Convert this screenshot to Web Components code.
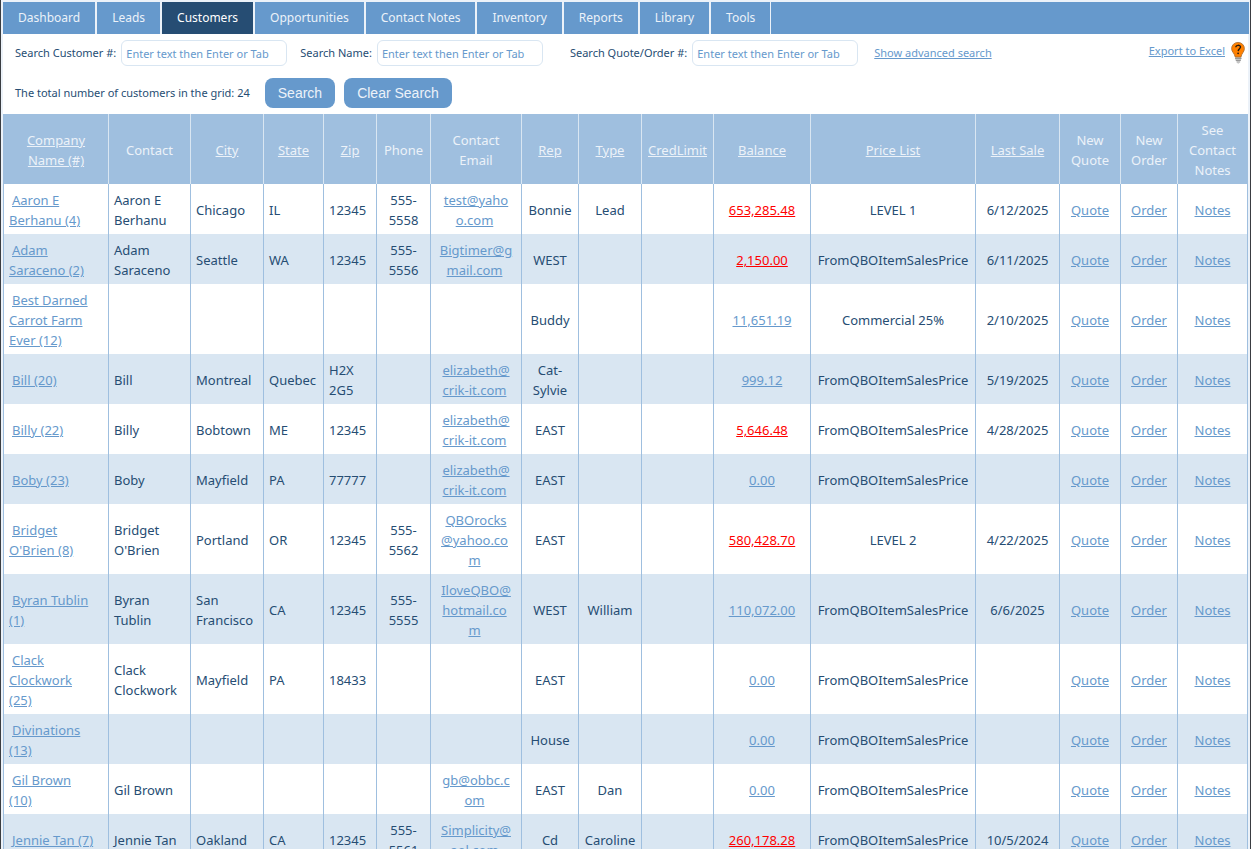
<!DOCTYPE html>
<html lang="en">
<head>
<meta charset="utf-8">
<title>Customers</title>
<style>
  :root {
    --ink: #264d73;
    --accent: #6699cc;
    --head: #9fbfdf;
    --tint: #d9e6f2;
    --pale: #ecf2f9;
  }
  html { background: #fff; scrollbar-width: none; }
  body { margin: 0; color: var(--ink); font: 11px/20px "Segoe UI", "Noto Sans", sans-serif; }
</style>
</head>
<body>
<crm-shell>
  <crm-tabs slot="nav">
    <crm-tab>Dashboard</crm-tab>
    <crm-tab>Leads</crm-tab>
    <crm-tab current>Customers</crm-tab>
    <crm-tab>Opportunities</crm-tab>
    <crm-tab>Contact Notes</crm-tab>
    <crm-tab>Inventory</crm-tab>
    <crm-tab>Reports</crm-tab>
    <crm-tab>Library</crm-tab>
    <crm-tab>Tools</crm-tab>
  </crm-tabs>
  <crm-search-bar slot="tools"></crm-search-bar>
  <crm-customer-grid></crm-customer-grid>
</crm-shell>

<script>
class Base extends HTMLElement {
  constructor() {
    super();
    this.attachShadow({ mode: "open" }).innerHTML = this.constructor.markup;
  }
}

customElements.define("crm-shell", class extends Base {
  static markup = `
    <style>
      :host { display: block; box-sizing: border-box; min-height: 100vh; background: #fff;
        border: solid #3a3d42; border-width: 0 1px; }
      .frame { border: solid var(--pale); border-width: 2px 1px 0 2px; }
      main { border-right: 1px solid var(--pale); }
    </style>
    <div class="frame">
      <slot name="nav"></slot>
      <main><slot name="tools"></slot><slot></slot></main>
    </div>`;
});

customElements.define("crm-tabs", class extends Base {
  static markup = `
    <style>
      :host { display: block; background: var(--accent); }
      nav { display: flex; height: 32px; }
    </style>
    <nav><slot></slot></nav>`;
});

customElements.define("crm-tab", class extends Base {
  static markup = `
    <style>
      :host { display: block; border-right: 2px solid var(--pale); }
      :host(:last-of-type) { border-right-width: 1px; }
      :host([current]) a { background: var(--ink); color: #fff; }
      a { display: block; padding: 0 15px; font-size: 12px; line-height: 32px;
        color: var(--pale); text-decoration: none; white-space: nowrap; }
    </style>
    <a href="#"><slot></slot></a>`;
});

customElements.define("crm-field", class extends Base {
  static markup = `
    <style>
      :host { display: flex; align-items: center; gap: 5px; }
      label { white-space: nowrap; }
      input { box-sizing: border-box; width: 166px; height: 26px; padding: 0 4px;
        border: 1px solid var(--tint); border-radius: 6px; background: #fff;
        color: var(--ink); font: inherit; }
      input::placeholder { color: var(--accent); opacity: 1; }
    </style>
    <label for="box"></label><input id="box" type="text" placeholder="Enter text then Enter or Tab">`;
  connectedCallback() {
    this.shadowRoot.querySelector("label").textContent = this.getAttribute("label");
  }
});

customElements.define("crm-button", class extends Base {
  static markup = `
    <style>
      :host { display: block; }
      button { display: block; height: 30px; padding: 0 13px; border: 0; border-radius: 8px;
        background: var(--accent); color: var(--pale);
        font: 14px/30px "Liberation Sans", Arial, sans-serif; }
    </style>
    <button type="button"><slot></slot></button>`;
});

customElements.define("crm-help", class extends Base {
  static markup = `
    <style>
      :host { display: block; }
      a, svg { display: block; }
    </style>
    <a href="#" aria-label="Help">
      <svg width="14" height="24" viewBox="0 0 14 24">
        <path d="M4 16h6.500l-.5 3-.8 1v1.500l-2 1.200-1.700-1.200V20l-1-1z" fill="#c4c4c4"/>
        <path d="M4 17.500h6.500M4.800 19.500h5" stroke="#8b8b8b" stroke-width=".8"/>
        <path d="M7 1.400a6.300 6.100 0 0 1 6.400 6.100c0 3.500-2.700 4.600-3.400 8.500H4.200C3.500 12.100.6 11 .6 7.500A6.300 6.100 0 0 1 7 1.400z" fill="#ff8000" stroke="#a8692c" stroke-width=".8"/>
        <path d="M4.800 6.300c.2-2.600 4.700-2.600 4.700-.2 0 1.700-2.200 1.800-2.300 4" fill="none" stroke="#24190e" stroke-width="1.400"/>
        <circle cx="7.100" cy="12.300" r=".9" fill="#24190e"/>
      </svg>
    </a>`;
});

customElements.define("crm-search-bar", class extends Base {
  static markup = `
    <style>
      :host { display: block; padding: 6px 3px 6px 12px; }
      .row { display: flex; align-items: center; }
      .fields { height: 26px; }
      crm-field { margin-right: 13px; }
      crm-field.wide { margin-right: 27px; }
      crm-field.last { margin-right: 16px; }
      a { color: var(--accent); white-space: nowrap; }
      .export { margin-left: auto; margin-right: 6px; padding-bottom: 4px; }
      .actions { margin-top: 12px; height: 30px; gap: 9px; }
      .actions span { margin-right: 6px; }
    </style>
    <div class="row fields">
      <crm-field label="Search Customer #:"></crm-field>
      <crm-field class="wide" label="Search Name:"></crm-field>
      <crm-field class="last" label="Search Quote/Order #:"></crm-field>
      <a href="#">Show advanced search</a>
      <a class="export" href="#">Export to Excel</a>
      <crm-help></crm-help>
    </div>
    <div class="row actions">
      <span>The total number of customers in the grid: 24</span>
      <crm-button>Search</crm-button>
      <crm-button>Clear Search</crm-button>
    </div>`;
});

const COLUMNS = [
  ["Company|Name (#)", 105, 1], ["Contact", 82, 0], ["City", 73, 1], ["State", 60, 1],
  ["Zip", 53, 1], ["Phone", 54, 0], ["Contact|Email", 91, 0], ["Rep", 57, 1],
  ["Type", 63, 1], ["CredLimit", 72, 1], ["Balance", 97, 1], ["Price List", 165, 1],
  ["Last Sale", 84, 1], ["New|Quote", 61, 0], ["New|Order", 57, 0], ["See|Contact|Notes", 70, 0]
];

const F = "FromQBOItemSalesPrice";
// company, contact, city, state, zip, phone, email, rep, type, balance, overdue, price list, last sale
const CUSTOMERS = [
  ["Aaron E|Berhanu (4)", "Aaron E|Berhanu", "Chicago", "IL", "12345", "555-|5558", "test@yaho|o.com", "Bonnie", "Lead", "653,285.48", 1, "LEVEL 1", "6/12/2025"],
  ["Adam|Saraceno (2)", "Adam|Saraceno", "Seattle", "WA", "12345", "555-|5556", "Bigtimer@g|mail.com", "WEST", "", "2,150.00", 1, F, "6/11/2025"],
  ["Best Darned|Carrot Farm|Ever (12)", "", "", "", "", "", "", "Buddy", "", "11,651.19", 0, "Commercial 25%", "2/10/2025"],
  ["Bill (20)", "Bill", "Montreal", "Quebec", "H2X|2G5", "", "elizabeth@|crik-it.com", "Cat-|Sylvie", "", "999.12", 0, F, "5/19/2025"],
  ["Billy (22)", "Billy", "Bobtown", "ME", "12345", "", "elizabeth@|crik-it.com", "EAST", "", "5,646.48", 1, F, "4/28/2025"],
  ["Boby (23)", "Boby", "Mayfield", "PA", "77777", "", "elizabeth@|crik-it.com", "EAST", "", "0.00", 0, F, ""],
  ["Bridget|O'Brien (8)", "Bridget|O'Brien", "Portland", "OR", "12345", "555-|5562", "QBOrocks|@yahoo.co|m", "EAST", "", "580,428.70", 1, "LEVEL 2", "4/22/2025"],
  ["Byran Tublin|(1)", "Byran|Tublin", "San|Francisco", "CA", "12345", "555-|5555", "IloveQBO@|hotmail.co|m", "WEST", "William", "110,072.00", 0, F, "6/6/2025"],
  ["Clack|Clockwork|(25)", "Clack|Clockwork", "Mayfield", "PA", "18433", "", "", "EAST", "", "0.00", 0, F, ""],
  ["Divinations|(13)", "", "", "", "", "", "", "House", "", "0.00", 0, F, ""],
  ["Gil Brown|(10)", "Gil Brown", "", "", "", "", "gb@obbc.c|om", "EAST", "Dan", "0.00", 0, F, ""],
  ["Jennie Tan (7)", "Jennie Tan", "Oakland", "CA", "12345", "555-|5561", "Simplicity@|aol.com", "Cd", "Caroline", "260,178.28", 1, F, "10/5/2024"]
];

const lines = (text) => text.replaceAll("|", "<br>");
const link = (text, cls = "") => text && `<a href="#" class="${cls}">${lines(text)}</a>`;
const left = (html) => `<td class="left">${html}</td>`;
const mid = (html) => `<td>${html}</td>`;

customElements.define("crm-customer-grid", class extends Base {
  static markup = `
    <style>
      :host { display: block; }
      table { width: 100%; table-layout: fixed; border-spacing: 0;
        border-left: 1px solid var(--head); font-size: 13px; line-height: 20px; }
      th, td { box-sizing: border-box; padding: 6px 0 4px; border-right: 1px solid var(--head);
        text-align: center; vertical-align: middle; font-weight: 400; white-space: nowrap; }
      th { background: var(--head); color: var(--pale); border-right-color: var(--tint); }
      th:last-child { border-right-color: var(--head); }
      th a { color: inherit; }
      td.left { padding-left: 5px; text-align: left; }
      td.email { padding-right: 3px; }
      td a { color: var(--accent); }
      td a.lead { padding-left: 3px; }
      td a.overdue { color: #f00; }
      tbody tr:nth-child(even) { background: var(--tint); }
    </style>
    <table>
      <colgroup>${COLUMNS.map((c) => `<col style="width:${c[1]}px">`).join("")}</colgroup>
      <thead><tr>${COLUMNS.map((c) => `<th scope="col">${c[2] ? link(c[0]) : lines(c[0])}</th>`).join("")}</tr></thead>
      <tbody>${CUSTOMERS.map(([company, contact, city, state, zip, phone, email, rep, type, balance, overdue, price, sale]) =>
        `<tr>${left(link(company, "lead"))}${left(lines(contact))}${left(lines(city))}${left(state)}${
          left(lines(zip))}${mid(lines(phone))}<td class="email">${link(email, "lead")}</td>${mid(lines(rep))}${mid(type)}${
          mid("")}${mid(link(balance, overdue ? "overdue" : ""))}${mid(price)}${mid(sale)}${
          mid(link("Quote"))}${mid(link("Order"))}${mid(link("Notes"))}</tr>`).join("")}</tbody>
    </table>`;
});
</script>
</body>
</html>
